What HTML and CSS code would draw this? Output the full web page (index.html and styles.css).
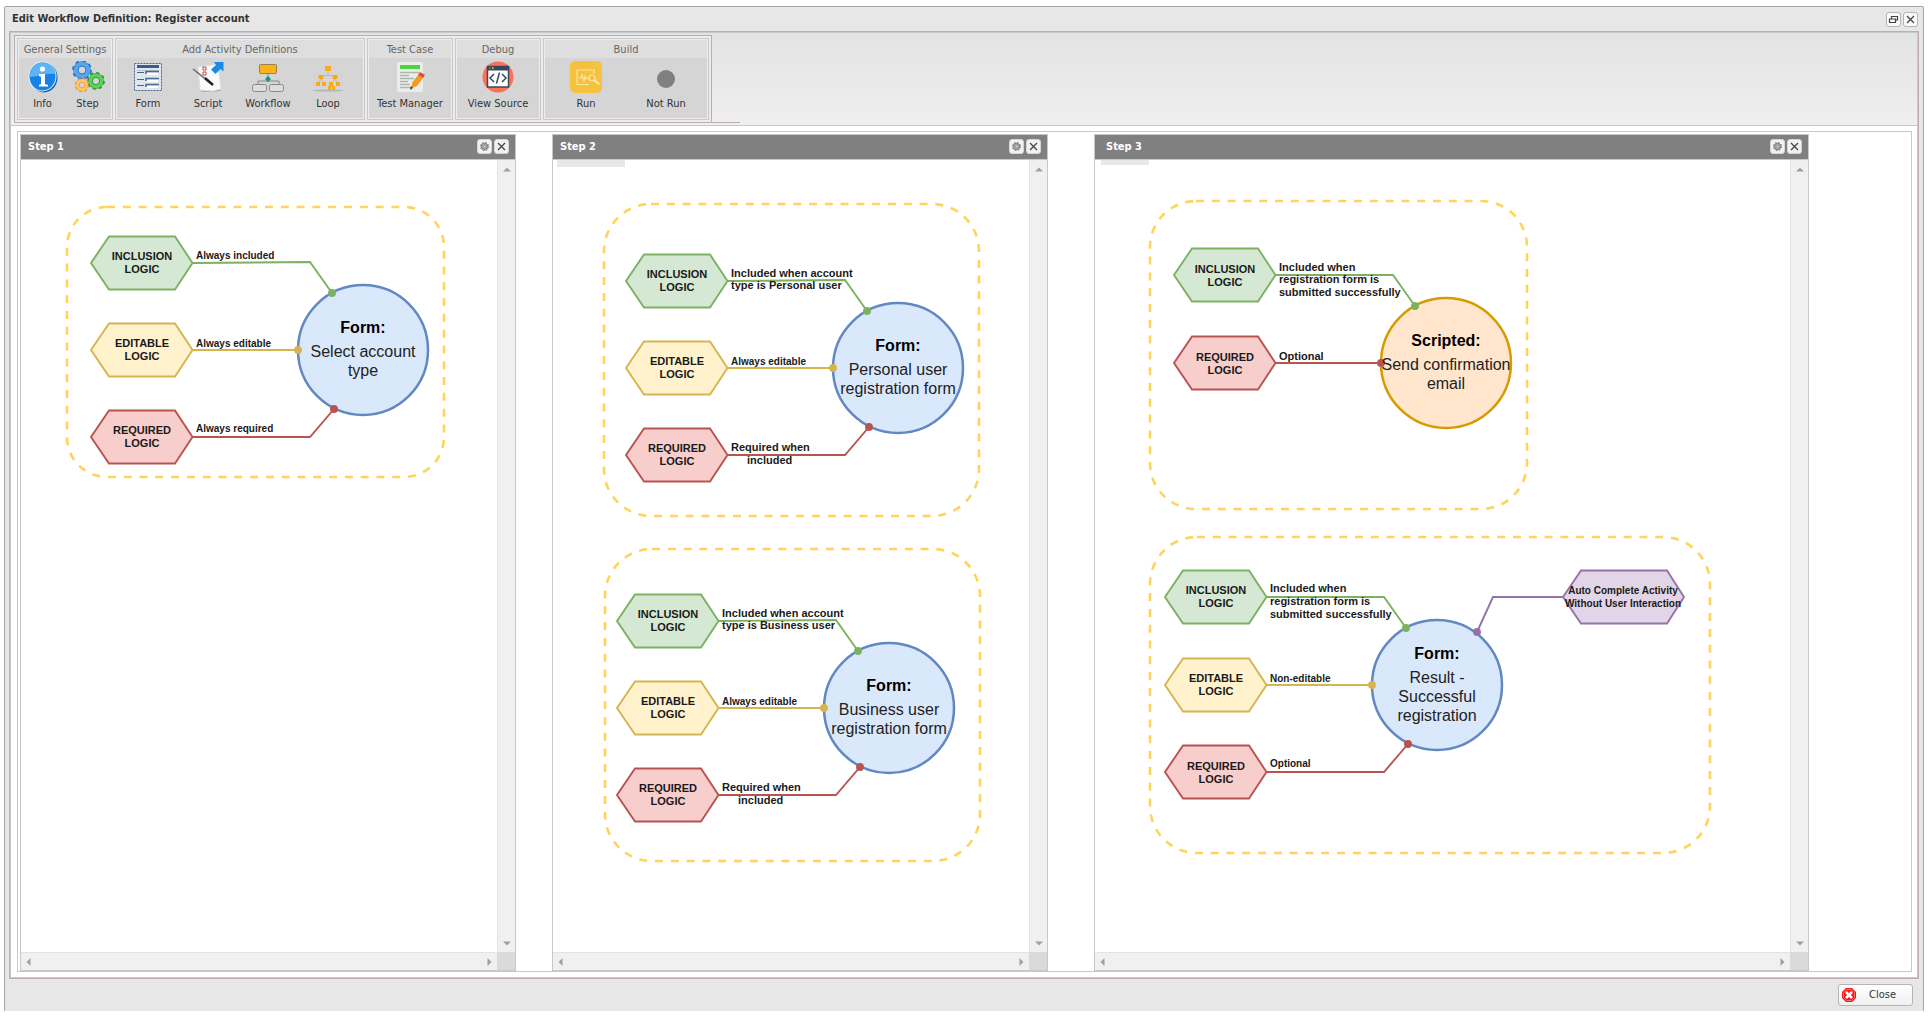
FILE: index.html
```html
<!DOCTYPE html>
<html lang="en">
<head>
<meta charset="utf-8">
<title>Edit Workflow Definition: Register account</title>
<link rel="stylesheet" href="styles.css">
</head>
<body>
<svg class="defs" width="0" height="0" aria-hidden="true">
  <defs>
    <polygon id="hex" points="0,0 18,-26.500 84,-26.500 101.500,0 84,26.500 18,26.500"/>
    <polygon id="hex-wide" points="0,0 18,-26.500 104,-26.500 121,0 104,26.500 18,26.500"/>
    <g id="gear">
      <circle cx="6.500" cy="6.500" r="3.200" fill="#aaa" stroke="#777" stroke-width="1"/>
      <circle cx="6.500" cy="6.500" r="4.200" fill="none" stroke="#777" stroke-width="1" stroke-dasharray="1.650 1.650"/>
      <circle cx="6.500" cy="6.500" r="1.200" fill="#e4e4e4" stroke="#777" stroke-width=".6"/>
    </g>
    <path id="cross" d="M3 3l7 7M10 3l-7 7" fill="none" stroke="#444" stroke-width="1.300"/>
    <g id="cog">
      <circle r="6.2" fill="none" stroke-width="5"/>
      <circle r="8.6" fill="none" stroke-width="2.6" stroke-dasharray="3.6 3.15"/>
    </g>
  </defs>
</svg>

<main class="window">
  <header class="titlebar">
    <h1 class="title">Edit Workflow Definition: Register account</h1>
    <div class="tools">
      <button class="tool" type="button" aria-label="Restore"><svg width="13" height="13" viewBox="0 0 13 13"><path d="M4.500 5.500V3.500h6v3.500h-2M2.500 6h6v3.500h-6z" fill="none" stroke="#444" stroke-width="1.200"/></svg></button>
      <button class="tool" type="button" aria-label="Close window"><svg width="13" height="13" viewBox="0 0 13 13"><use href="#cross"/></svg></button>
    </div>
  </header>

  <div class="panel">
    <nav class="toolbar">
      <div class="ribbon">
        <div class="groups">
          <section class="group narrow">
            <h2 class="group-title">General Settings</h2>
            <div class="actions">
              <button class="action" type="button">
                <svg width="32" height="32" viewBox="0 0 32 32"><ellipse cx="17" cy="16.500" rx="13.500" ry="15" fill="#0a5cb8"/><ellipse cx="15.500" cy="15.500" rx="14" ry="15" fill="#e8f3fc"/><ellipse cx="15.500" cy="15.500" rx="13" ry="14" fill="#1482e6"/><path d="M2.500 16C3 7 9 1.500 15.500 1.500S28 7 28.500 13c-8-1-18 3-26 3z" fill="#5db4f5"/><path d="M12 13h6v10l3 1v1.500h-9V24l2-1v-7l-2-1z" fill="#fff"/><circle cx="15.500" cy="8" r="2.600" fill="#fff"/></svg>
                <span>Info</span>
              </button>
              <button class="action" type="button">
                <svg width="34" height="32" viewBox="0 0 34 32"><g transform="translate(11 9)" stroke="#58a6ee"><use href="#cog" stroke="#2a75c4"/><circle r="6.200" fill="none" stroke-width="4"/><circle r="4" fill="#d5d5d5" stroke="#2a75c4"/></g><g transform="translate(25 20) scale(.9)" stroke="#5fd05a"><use href="#cog" stroke="#259b2e"/><circle r="6.200" fill="none" stroke-width="4"/><circle r="4" fill="#d5d5d5" stroke="#259b2e"/></g><g transform="translate(11 24) scale(.72)" stroke="#ffc868"><use href="#cog" stroke="#e8952e"/><circle r="6.200" fill="none" stroke-width="4"/><circle r="4" fill="#d5d5d5" stroke="#e8952e"/></g></svg>
                <span>Step</span>
              </button>
            </div>
          </section>
          <section class="group wide">
            <h2 class="group-title">Add Activity Definitions</h2>
            <div class="actions">
              <button class="action medium" type="button">
                <svg width="32" height="32" viewBox="0 0 32 32"><rect x="2.500" y="2.500" width="27" height="27" fill="#dfe6ee" stroke="#4a6484" stroke-dasharray="2 1"/><path d="M5 4h22v3H5z" fill="#3a5c86"/><path d="M5 9.500h22" stroke="#b5c3d3"/><path d="M5 11.500h7M5 18.500h7M5 24.500h7" stroke="#4a6484"/><path d="M14 13v-2.500h13M14 20v-2.500h13M14 26v-2.500h13" fill="none" stroke="#4a6a94" stroke-width="1.500"/><path d="M15 12h11v2H15zM15 19h11v2H15zM15 25h11v2H15z" fill="#fff"/></svg>
                <span>Form</span>
              </button>
              <button class="action medium" type="button">
                <svg width="34" height="32" viewBox="0 0 34 32"><path d="M8 29l20-2 2 3-18 1z" fill="#a5a5a5"/><path d="M7 6l20-3 3 25-9 2-12-1z" fill="#fafafa" stroke="#ddd"/><path d="M12 6h3v3h-3zM12 11h3v3h-3z" fill="none" stroke="#c44"/><path d="M2 8l16 13" stroke="#aaa" stroke-width="2"/><path d="M2 8l14 11" stroke="#555"/><path d="M14 17l8 7" stroke="#222" stroke-width="2.500"/><path d="M23 1h9.500v9.500L29.500 8l-5 5-4.500-4.500 5-4.500z" fill="#1a8ae6"/></svg>
                <span>Script</span>
              </button>
              <button class="action medium" type="button">
                <svg width="34" height="32" viewBox="0 0 34 32"><rect x="8.500" y="3.500" width="17" height="9" rx="1" fill="#f9b41c" stroke="#98804a"/><path d="M17 13v8M7 23v-3h21v3" fill="none" stroke="#888"/><path d="M17 15l3 3-3 3-3-3z" fill="#079b86"/><rect x="1.500" y="23.500" width="14" height="7" rx="2" fill="#ddd" stroke="#888"/><rect x="18.500" y="23.500" width="14" height="7" rx="2" fill="#ddd" stroke="#888"/></svg>
                <span>Workflow</span>
              </button>
              <button class="action medium" type="button">
                <svg width="32" height="32" viewBox="0 0 32 32"><ellipse cx="16" cy="29.500" rx="15" ry="1" fill="#b5b5b5"/><path d="M16 10v5M9 17v-2.500h14V17M9 18l-4 6M9 18l4 6M23 18l-4 6M23 18l4 6" fill="none" stroke="#bbb"/><g fill="#f9ac1a"><path d="M13 5h6v5h-6zM6.500 14h5v4h-5zM20.500 14h5v4h-5zM4 21h4v4H4zM10 21h4v4h-4zM17 21h4v4h-4zM24 21h4v4h-4zM16 25h3v4h-3zM20 25h3v4h-3z"/></g></svg>
                <span>Loop</span>
              </button>
            </div>
          </section>
          <section class="group single">
            <h2 class="group-title">Test Case</h2>
            <div class="actions">
              <button class="action" type="button">
                <svg width="32" height="32" viewBox="0 0 32 32"><rect x="3" y="1" width="26" height="30" rx="2" fill="#ececec"/><path d="M6 4h20v4H6z" fill="#4bd63c"/><path d="M6 11.500h19M6 14.500h9M6 17.500h14M6 20.500h8M6 23.500h10M6 26.500h11" stroke="#aab8a8" stroke-width="1.500"/><path d="M18 22l6-8 5 3-6 8-5 2z" fill="#f49a1c"/><path d="M24 14l2-3 5 3-2 3z" fill="#e2483c"/><path d="M17 25l2 2-3 2z" fill="#333"/></svg>
                <span>Test Manager</span>
              </button>
            </div>
          </section>
          <section class="group single">
            <h2 class="group-title">Debug</h2>
            <div class="actions">
              <button class="action" type="button">
                <svg width="32" height="32" viewBox="0 0 32 32"><circle cx="16" cy="16" r="15.500" fill="#ff7058"/><rect x="5.500" y="5.500" width="21" height="20.500" fill="#fff" stroke="#324a5e" stroke-width="1.500"/><path d="M5 5h22v4.500H5z" fill="#324a5e"/><path d="M7 7h1.500" stroke="#f55" stroke-width="1.500"/><path d="M10 7h1.500" stroke="#fc4" stroke-width="1.500"/><path d="M12 13l-4 4 4 4M20 13l4 4-4 4M17.500 11.500l-3 11" fill="none" stroke="#324a5e" stroke-width="1.500"/></svg>
                <span>View Source</span>
              </button>
            </div>
          </section>
          <section class="group build">
            <h2 class="group-title">Build</h2>
            <div class="actions">
              <button class="action large" type="button">
                <svg width="32" height="32" viewBox="0 0 32 32"><rect width="32" height="32" rx="5" fill="#f4c23c"/><g fill="none" stroke="#fbe6a4" stroke-width="1.200"><path d="M19 23.500H7V9h17v4"/><path d="M9 17h2l1-3 2 6 1-5 1 3 1-1h2"/><circle cx="22" cy="17" r="3"/><path d="M24 19l5 4" stroke-width="2.500"/></g></svg>
                <span>Run</span>
              </button>
              <button class="action large" type="button">
                <svg width="32" height="32" viewBox="0 0 32 32"><circle cx="16" cy="18" r="9" fill="#808080"/></svg>
                <span>Not Run</span>
              </button>
            </div>
          </section>
        </div>
      </div>
    </nav>

    <div class="content">
      <div class="workspace">

        <section class="step">
          <header class="step-head">
            <h2 class="step-title">Step 1</h2>
            <button class="tool" type="button" aria-label="Settings"><svg width="13" height="13" viewBox="0 0 13 13"><use href="#gear"/></svg></button>
            <button class="tool" type="button" aria-label="Remove step"><svg width="13" height="13" viewBox="0 0 13 13"><use href="#cross"/></svg></button>
          </header>
          <div class="canvas">
            <svg class="diagram" width="476" height="792">
              <rect class="boundary" x="46" y="47" width="377" height="270" rx="40"/>
              <g transform="translate(70 103)">
                <circle class="node form" cx="272" cy="87" r="65"/>
                <g class="inclusion"><polyline points="102,0 219,-1 241,30"/><circle class="dot" cx="241" cy="30" r="3"/><use href="#hex"/></g>
                <g class="editable"><polyline points="102,87 207,87"/><circle class="dot" cx="207" cy="87" r="3"/><use href="#hex" y="87"/></g>
                <g class="required"><polyline points="102,174 219,174 243,146"/><circle class="dot" cx="243" cy="146" r="3"/><use href="#hex" y="174"/></g>
                <text class="logic" x="51" y="-3">INCLUSION<tspan x="51" dy="13">LOGIC</tspan></text>
                <text class="logic" x="51" y="84">EDITABLE<tspan x="51" dy="13">LOGIC</tspan></text>
                <text class="logic" x="51" y="171">REQUIRED<tspan x="51" dy="13">LOGIC</tspan></text>
                <text class="rule" x="105" y="-4">Always included</text>
                <text class="rule" x="105" y="84">Always editable</text>
                <text class="rule" x="105" y="169">Always required</text>
                <text class="kind" x="272" y="70">Form:</text>
                <text class="name" x="272" y="94">Select account<tspan x="272" dy="19">type</tspan></text>
              </g>
            </svg>
          </div>
          <div class="vbar"><svg width="8" height="5"><path d="M0 4.500L4 .500l4 4z"/></svg><svg width="8" height="5"><path d="M0 .500L4 4.500l4-4z"/></svg></div>
          <div class="hbar"><svg width="5" height="8"><path d="M4.500 0L.500 4l4 4z"/></svg><svg width="5" height="8"><path d="M.500 0L4.500 4l-4 4z"/></svg></div>
          <div class="corner"></div>
        </section>

        <section class="step">
          <header class="step-head">
            <h2 class="step-title">Step 2</h2>
            <button class="tool" type="button" aria-label="Settings"><svg width="13" height="13" viewBox="0 0 13 13"><use href="#gear"/></svg></button>
            <button class="tool" type="button" aria-label="Remove step"><svg width="13" height="13" viewBox="0 0 13 13"><use href="#cross"/></svg></button>
          </header>
          <div class="canvas">
            <svg class="diagram" width="476" height="792">
              <rect class="tab" x="4" y="0" width="68" height="7"/>
              <rect class="boundary" x="51" y="44" width="375" height="312" rx="47"/>
              <g transform="translate(73 121)">
                <circle class="node form" cx="272" cy="87" r="65"/>
                <g class="inclusion"><polyline points="102,0 219,-1 241,30"/><circle class="dot" cx="241" cy="30" r="3"/><use href="#hex"/></g>
                <g class="editable"><polyline points="102,87 207,87"/><circle class="dot" cx="207" cy="87" r="3"/><use href="#hex" y="87"/></g>
                <g class="required"><polyline points="102,174 219,174 243,146"/><circle class="dot" cx="243" cy="146" r="3"/><use href="#hex" y="174"/></g>
                <text class="logic" x="51" y="-3">INCLUSION<tspan x="51" dy="13">LOGIC</tspan></text>
                <text class="logic" x="51" y="84">EDITABLE<tspan x="51" dy="13">LOGIC</tspan></text>
                <text class="logic" x="51" y="171">REQUIRED<tspan x="51" dy="13">LOGIC</tspan></text>
                <text class="rule long" x="105" y="-4">Included when account<tspan x="105" dy="12">type is Personal user</tspan></text>
                <text class="rule" x="105" y="84">Always editable</text>
                <text class="rule long" x="105" y="170">Required when<tspan x="121" dy="13">included</tspan></text>
                <text class="kind" x="272" y="70">Form:</text>
                <text class="name" x="272" y="94">Personal user<tspan x="272" dy="19">registration form</tspan></text>
              </g>
              <rect class="boundary" x="52" y="389" width="375" height="312" rx="47"/>
              <g transform="translate(64 461)">
                <circle class="node form" cx="272" cy="87" r="65"/>
                <g class="inclusion"><polyline points="102,0 219,-1 241,30"/><circle class="dot" cx="241" cy="30" r="3"/><use href="#hex"/></g>
                <g class="editable"><polyline points="102,87 207,87"/><circle class="dot" cx="207" cy="87" r="3"/><use href="#hex" y="87"/></g>
                <g class="required"><polyline points="102,174 219,174 243,146"/><circle class="dot" cx="243" cy="146" r="3"/><use href="#hex" y="174"/></g>
                <text class="logic" x="51" y="-3">INCLUSION<tspan x="51" dy="13">LOGIC</tspan></text>
                <text class="logic" x="51" y="84">EDITABLE<tspan x="51" dy="13">LOGIC</tspan></text>
                <text class="logic" x="51" y="171">REQUIRED<tspan x="51" dy="13">LOGIC</tspan></text>
                <text class="rule long" x="105" y="-4">Included when account<tspan x="105" dy="12">type is Business user</tspan></text>
                <text class="rule" x="105" y="84">Always editable</text>
                <text class="rule long" x="105" y="170">Required when<tspan x="121" dy="13">included</tspan></text>
                <text class="kind" x="272" y="70">Form:</text>
                <text class="name" x="272" y="94">Business user<tspan x="272" dy="19">registration form</tspan></text>
              </g>
            </svg>
          </div>
          <div class="vbar"><svg width="8" height="5"><path d="M0 4.500L4 .500l4 4z"/></svg><svg width="8" height="5"><path d="M0 .500L4 4.500l4-4z"/></svg></div>
          <div class="hbar"><svg width="5" height="8"><path d="M4.500 0L.500 4l4 4z"/></svg><svg width="5" height="8"><path d="M.500 0L4.500 4l-4 4z"/></svg></div>
          <div class="corner"></div>
        </section>

        <section class="step last">
          <header class="step-head">
            <h2 class="step-title">Step 3</h2>
            <button class="tool" type="button" aria-label="Settings"><svg width="13" height="13" viewBox="0 0 13 13"><use href="#gear"/></svg></button>
            <button class="tool" type="button" aria-label="Remove step"><svg width="13" height="13" viewBox="0 0 13 13"><use href="#cross"/></svg></button>
          </header>
          <div class="canvas">
            <svg class="diagram" width="695" height="792">
              <rect class="tab" x="6" y="0" width="48" height="5"/>
              <rect class="boundary" x="55" y="41" width="377" height="308" rx="46"/>
              <g transform="translate(79 115)">
                <circle class="node scripted" cx="272" cy="88" r="65"/>
                <g class="inclusion"><polyline points="102,0 219,0 241,31"/><circle class="dot" cx="241" cy="31" r="3"/><use href="#hex"/></g>
                <g class="required"><polyline points="102,88 207,88"/><circle class="dot" cx="207" cy="88" r="3"/><use href="#hex" y="88"/></g>
                <text class="logic" x="51" y="-2">INCLUSION<tspan x="51" dy="13">LOGIC</tspan></text>
                <text class="logic" x="51" y="86">REQUIRED<tspan x="51" dy="13">LOGIC</tspan></text>
                <text class="rule long" x="105" y="-4">Included when<tspan x="105" dy="12">registration form is</tspan><tspan x="105" dy="13">submitted successfully</tspan></text>
                <text class="rule long" x="105" y="85">Optional</text>
                <text class="kind" x="272" y="71">Scripted:</text>
                <text class="name" x="272" y="95">Send confirmation<tspan x="272" dy="19">email</tspan></text>
              </g>
              <rect class="boundary" x="55" y="377" width="560" height="316" rx="47"/>
              <g transform="translate(70 437)">
                <circle class="node form" cx="272" cy="88" r="65"/>
                <g class="inclusion"><polyline points="102,0 219,0 241,31"/><circle class="dot" cx="241" cy="31" r="3"/><use href="#hex"/></g>
                <g class="editable"><polyline points="102,88 207,88"/><circle class="dot" cx="207" cy="88" r="3"/><use href="#hex" y="88"/></g>
                <g class="required"><polyline points="102,175 219,175 243,147"/><circle class="dot" cx="243" cy="147" r="3"/><use href="#hex" y="175"/></g>
                <g class="auto"><polyline points="398,0 328,0 312,35"/><circle class="dot" cx="312" cy="35" r="3"/><use href="#hex-wide" x="398"/></g>
                <text class="logic" x="51" y="-3">INCLUSION<tspan x="51" dy="13">LOGIC</tspan></text>
                <text class="logic" x="51" y="85">EDITABLE<tspan x="51" dy="13">LOGIC</tspan></text>
                <text class="logic" x="51" y="173">REQUIRED<tspan x="51" dy="13">LOGIC</tspan></text>
                <text class="rule long" x="105" y="-5">Included when<tspan x="105" dy="13">registration form is</tspan><tspan x="105" dy="13">submitted successfully</tspan></text>
                <text class="rule" x="105" y="85">Non-editable</text>
                <text class="rule" x="105" y="170">Optional</text>
                <text class="rule middle" x="458" y="-3">Auto Complete Activity<tspan x="458" dy="13">Without User Interaction</tspan></text>
                <text class="kind" x="272" y="62">Form:</text>
                <text class="name" x="272" y="86">Result -<tspan x="272" dy="19">Successful</tspan><tspan x="272" dy="19">registration</tspan></text>
              </g>
            </svg>
          </div>
          <div class="vbar"><svg width="8" height="5"><path d="M0 4.500L4 .500l4 4z"/></svg><svg width="8" height="5"><path d="M0 .500L4 4.500l4-4z"/></svg></div>
          <div class="hbar"><svg width="5" height="8"><path d="M4.500 0L.500 4l4 4z"/></svg><svg width="5" height="8"><path d="M.500 0L4.500 4l-4 4z"/></svg></div>
          <div class="corner"></div>
        </section>

      </div>
    </div>
  </div>

  <footer class="footer">
    <button class="close" type="button">
      <svg width="14" height="14" viewBox="0 0 14 14"><path d="M4 0h6l4 4v6l-4 4H4l-4-4V4z" fill="#f01818"/><path d="M4.500 1.500h5l3 3v5l-3 3h-5l-3-3v-5z" fill="none" stroke="#ff6a6a"/><path d="M4 4l6 6M10 4l-6 6" stroke="#fff" stroke-width="2.500"/></svg>
      <span>Close</span>
    </button>
  </footer>
</main>
</body>
</html>
```
FILE: styles.css
```css
* { box-sizing: border-box; }

body {
  margin: 0;
  padding: 6px 4px 7px;
  min-height: 100vh;
  display: flex;
  flex-direction: column;
  background: #fff;
  color: #333;
  font: 11px/16px "DejaVu Sans Condensed", "DejaVu Sans", sans-serif;
}

h1, h2 { margin: 0; font-size: inherit; }
button { font: inherit; color: inherit; padding: 0; margin: 0; cursor: pointer; }
svg { display: block; flex: none; }
.defs { position: absolute; }

.window {
  flex: 1;
  display: flex;
  flex-direction: column;
  padding: 0 4px;
  border: 1px solid #a5a5a5;
  border-bottom: 0;
  border-radius: 2px 2px 0 0;
  background: #e7e7e7;
}

.titlebar {
  display: flex;
  align-items: center;
  justify-content: space-between;
  height: 24px;
  padding: 0 1px 0 3px;
}
.title { font-weight: bold; }
.tools { display: flex; gap: 2px; }
.tool {
  display: grid;
  place-items: center;
  width: 15px;
  height: 15px;
  border: 1px solid #b5b5b5;
  border-radius: 3px;
  background: #fafafa;
}

.panel {
  flex: 1;
  display: flex;
  flex-direction: column;
  border: 1px solid #bdadb0;
  outline: 1px solid #c6c9cf;
  outline-offset: -2px;
  padding: 1px;
  background: #fff;
}

.toolbar {
  padding: 2px 3px;
  border-bottom: 1px solid #c8c8c8;
  background: linear-gradient(#e3e3e3, #efefef);
}
.ribbon {
  width: fit-content;
  padding-right: 28px;
  border-bottom: 1px solid #bdadb0;
}
.groups {
  display: flex;
  gap: 2px;
  padding: 2px;
  border: 1px solid #bdadb0;
  border-bottom: 0;
  background: #ececec;
}
.group {
  height: 82px;
  border: 1px solid #c8c8c8;
  box-shadow: inset 0 0 0 1px #ededed;
  padding: 1px;
  background: #d5d5d5;
}
.group-title {
  height: 18px;
  padding-top: 2px;
  background: #dedede;
  color: #666;
  font-weight: normal;
  text-align: center;
}
.narrow { width: 96px; }
.wide { width: 250px; }
.single { width: 86px; }
.build { width: 166px; }
.actions { display: flex; padding: 3px 1px 0; }
.single .actions { justify-content: center; }
.action {
  display: flex;
  flex-direction: column;
  align-items: center;
  gap: 3px;
  min-width: 45px;
  border: 0;
  background: none;
  white-space: nowrap;
}
.medium { min-width: 60px; }
.large { min-width: 80px; }

.content { flex: 1; display: flex; padding: 5px 5px 5px 6px; }
.workspace {
  flex: 1;
  display: grid;
  grid-template-columns: 496fr 496fr 725fr;
  gap: 36px;
  padding: 2px 102px 0 2px;
  border: 1px solid #c8c8c8;
}
.step {
  display: grid;
  grid-template: 25px 1fr 18px / minmax(0, 1fr) 18px;
  border: 1px solid #c8c8c8;
  background: #fff;
}
.last { margin-left: 10px; }
.step-head {
  grid-column: 1 / -1;
  display: flex;
  align-items: center;
  gap: 2px;
  padding: 0 6px 1px 7px;
  border-bottom: 1px solid #c8c8c8;
  background: #808080;
}
.last .step-head { padding-left: 11px; }
.step-head .tool { border-color: #d5d5d5; background: #f2f2f2; }
.step-title { flex: 1; color: #fff; font-weight: bold; }
.canvas { overflow: hidden; }
.vbar, .hbar {
  display: flex;
  align-items: center;
  justify-content: space-between;
  background: #f0f0f0;
  fill: #a0a0a0;
}
.vbar { flex-direction: column; padding: 7px 0 6px; border-left: 1px solid #e3e3e3; }
.hbar { padding: 0 5px; border-top: 1px solid #e3e3e3; }
.corner { background: #dadada; }

.diagram { font-family: "Liberation Sans", Arial, sans-serif; }
.tab { fill: #e8e8e8; }
.boundary { fill: none; stroke: #ffd45a; stroke-width: 2.6; stroke-dasharray: 8 7.8; }
.node { stroke-width: 2.5; }
.form { fill: #dae8fc; stroke: #6288c2; }
.scripted { fill: #ffe6cc; stroke: #d79b00; }
.diagram polyline { fill: none; }
.inclusion { fill: #d5e8d4; stroke: #7cb160; }
.editable { fill: #fff2cc; stroke: #d6b450; }
.required { fill: #f8cecc; stroke: #b85450; }
.auto { fill: #e1d5e7; stroke: #9673a6; }
.inclusion, .editable, .required, .auto { stroke-width: 1.9; }
.inclusion .dot { fill: #7cb160; }
.editable .dot { fill: #d6b450; }
.required .dot { fill: #b85450; }
.auto .dot { fill: #9673a6; }
.logic, .kind, .name { text-anchor: middle; }
.logic, .long { font-size: 11px; font-weight: bold; fill: #1a1a1a; }
.rule { font-size: 10px; font-weight: bold; fill: #1a1a1a; }
.rule.long { font-size: 11px; }
.middle { text-anchor: middle; }
.kind { font-size: 16px; font-weight: bold; fill: #000; }
.name { font-size: 16px; fill: #222; }

.footer {
  display: flex;
  align-items: center;
  justify-content: flex-end;
  height: 32px;
  padding-right: 6px;
}
.close {
  display: flex;
  align-items: center;
  width: 75px;
  height: 22px;
  padding: 0 3px;
  border: 1px solid #b5b5b5;
  border-radius: 3px;
  background: linear-gradient(#fff, #f0f0f0);
}
.close span { flex: 1; }
```
